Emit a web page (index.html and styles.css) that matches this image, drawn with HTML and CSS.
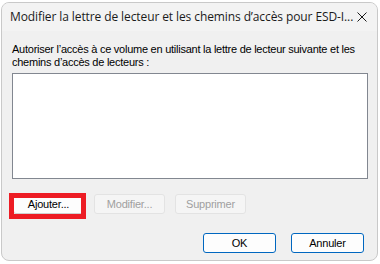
FILE: index.html
```html
<!DOCTYPE html>
<html lang="fr">
<head>
<meta charset="utf-8">
<link rel="stylesheet" href="styles.css">
</head>
<body>
<div class="window">
  <div class="titlebar">
    <span class="title">Modifier la lettre de lecteur et les chemins d’accès pour ESD-I...</span>
    <svg class="close" width="10" height="10" viewBox="0 0 10 10"><path d="M0.5 0.5L9.5 9.5M9.5 0.5L0.5 9.5" stroke="#1a1a1a" stroke-width="1" fill="none"/></svg>
  </div>
  <div class="content">
    <p class="desc">Autoriser l’accès à ce volume en utilisant la lettre de lecteur suivante et les chemins d’accès de lecteurs :</p>
    <div class="listbox"></div>
    <div class="row actions">
      <div class="btn-wrap">
        <button class="btn">Ajouter...</button>
        <span class="highlight"></span>
      </div>
      <button class="btn disabled">Modifier...</button>
      <button class="btn disabled">Supprimer</button>
    </div>
    <div class="row footer">
      <button class="btn default">OK</button>
      <button class="btn default">Annuler</button>
    </div>
  </div>
</div>
</body>
</html>
```
FILE: styles.css
```css
html, body {
  margin: 0;
  padding: 0;
}
body {
  width: 380px;
  height: 264px;
  background: #ffffff;
  overflow: hidden;
  font-family: "Liberation Sans", Arial, sans-serif;
}
.window {
  margin: 2px 0 0 1px;
  width: 375px;
  height: 257px;
  border: 1px solid #c9c9c9;
  border-radius: 8px;
  background: #f0f0f0;
  overflow: hidden;
}
.titlebar {
  height: 28px;
  background: #f3f3f3;
  display: flex;
  align-items: center;
  padding: 0 10px 0 8px;
}
.title {
  flex: 1;
  font-family: "Open Sans", "Noto Sans", sans-serif;
  font-size: 12px;
  color: #1b1b1b;
  white-space: nowrap;
  letter-spacing: -0.1px;
  padding-bottom: 1px;
}
.content {
  padding: 0 9px 0 10px;
}
.desc {
  margin: 12px 0 0 0;
  font-size: 11px;
  line-height: 13px;
  color: #000;
  width: 360px;
  letter-spacing: -0.25px;
}
.listbox {
  margin-top: 4px;
  width: 354px;
  height: 104px;
  border: 1px solid #828790;
  background: #ffffff;
}
.row {
  display: flex;
}
.actions {
  margin-top: 15px;
  gap: 10px;
  padding-left: 1px;
}
.footer {
  margin-top: 19px;
  justify-content: flex-end;
  gap: 15px;
  padding-right: 4px;
}
.btn {
  width: 71px;
  height: 20px;
  padding: 0;
  font-family: "Liberation Sans", Arial, sans-serif;
  font-size: 11px;
  color: #000;
  background: #fdfdfd;
  border: 1px solid #d0d0d0;
  border-radius: 3px;
  letter-spacing: -0.2px;
}
.btn.disabled {
  background: #f5f5f5;
  border-color: #e3e3e3;
  color: #a0a0a0;
}
.btn.default {
  width: 73px;
  border-color: #0067c0;
}
.btn-wrap {
  position: relative;
  display: flex;
}
.highlight {
  position: absolute;
  left: -4px;
  top: -1px;
  width: 67px;
  height: 16px;
  border: 5px solid #ed1c24;
}
```
